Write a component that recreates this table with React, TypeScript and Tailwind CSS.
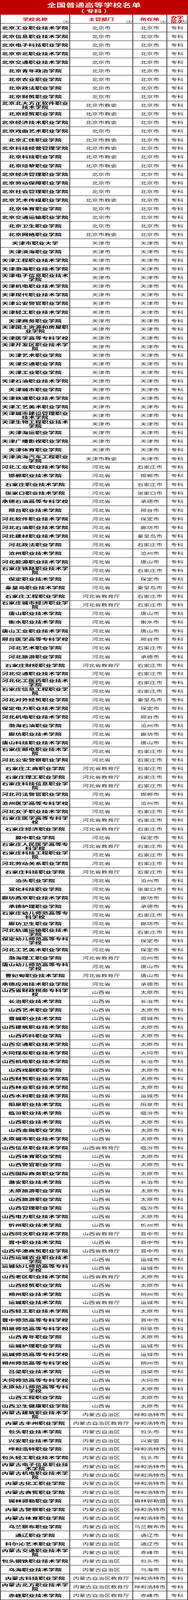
import { FC, useState } from "react";

const raw = `北京工业职业技术学院|北京市|北京市
北京信息职业技术学院|北京市|北京市
北京电子科技职业学院|北京市|北京市
北京京北职业技术学院|北京市|北京市
北京交通职业技术学院|北京市|北京市
北京青年政治学院|北京市|北京市
北京农业职业学院|北京市|北京市
北京政法职业学院|北京市|北京市
北京财贸职业学院|北京市|北京市
北京北大方正软件职业技术学院|北京市教委|北京市
北京经贸职业学院|北京市教委|北京市
北京经济技术职业学院|北京市教委|北京市
北京戏曲艺术职业学院|北京市|北京市
北京汇佳职业学院|北京市教委|北京市
北京科技经营管理学院|北京市教委|北京市
北京科技职业学院|北京市教委|北京市
北京培黎职业学院|北京市教委|北京市
北京经济管理职业学院|北京市|北京市
北京劳动保障职业学院|北京市|北京市
北京社会管理职业学院|北京市|北京市
北京艺术传媒职业学院|北京市教委|北京市
北京体育职业学院|北京市|北京市
北京交通运输职业学院|北京市|北京市
北京卫生职业学院|北京市|北京市
北京网络职业学院|北京市教委|北京市
天津市职业大学|天津市|天津市
天津滨海职业学院|天津市|天津市
天津工程职业技术学院|天津市|天津市
天津渤海职业技术学院|天津市|天津市
天津电子信息职业技术学院|天津市|天津市
天津机电职业技术学院|天津市|天津市
天津现代职业技术学院|天津市|天津市
天津公安警官职业学院|天津市|天津市
天津轻工职业技术学院|天津市|天津市
天津商务职业学院|天津市|天津市
天津国土资源和房屋职业学院|天津市|天津市
天津医学高等专科学校|天津市|天津市
天津开发区职业技术学院|天津市|天津市
天津艺术职业学院|天津市|天津市
天津交通职业学院|天津市|天津市
天津工业职业学院|天津市|天津市
天津石油职业技术学院|天津市|天津市
天津城市职业学院|天津市|天津市
天津铁道职业技术学院|天津市|天津市
天津工艺美术职业学院|天津市|天津市
天津城市建设管理职业技术学院|天津市|天津市
天津生物工程职业技术学院|天津市|天津市
天津海运职业学院|天津市|天津市
天津广播影视职业学院|天津市|天津市
天津体育职业学院|天津市|天津市
天津滨海汽车工程职业学院|天津市教委|天津市
河北工业职业技术学院|河北省|石家庄市
邯郸职业技术学院|河北省|邯郸市
石家庄职业技术学院|河北省|石家庄市
张家口职业技术学院|河北省|张家口市
承德石油高等专科学校|河北省|承德市
邢台职业技术学院|河北省|邢台市
河北软件职业技术学院|河北省|保定市
河北石油职业技术学院|河北省|廊坊市
河北建材职业技术学院|河北省|秦皇岛市
河北政法职业学院|河北省|石家庄市
沧州职业技术学院|河北省|沧州市
河北能源职业技术学院|河北省|唐山市
石家庄铁路职业技术学院|河北省|石家庄市
保定职业技术学院|河北省|保定市
秦皇岛职业技术学院|河北省|秦皇岛市
石家庄工程职业学院|河北省教育厅|石家庄市
石家庄城市经济职业学院|河北省教育厅|石家庄市
唐山职业技术学院|河北省|唐山市
衡水职业技术学院|河北省|衡水市
唐山工业职业技术学院|河北省|唐山市
邢台医学高等专科学校|河北省|邢台市
河北艺术职业学院|河北省|石家庄市
河北旅游职业学院|河北省|承德市
石家庄财经职业学院|河北省教育厅|石家庄市
河北交通职业技术学院|河北省|石家庄市
河北化工医药职业技术学院|河北省|石家庄市
石家庄信息工程职业学院|河北省|石家庄市
河北对外经贸职业学院|河北省|秦皇岛市
保定电力职业技术学院|河北省|保定市
河北机电职业技术学院|河北省|邢台市
渤海石油职业学院|河北省|沧州市
廊坊职业技术学院|河北省|廊坊市
唐山科技职业技术学院|河北省|唐山市
石家庄邮电职业技术学院|河北省|石家庄市
河北公安警察职业学院|河北省|石家庄市
石家庄工商职业学院|河北省教育厅|石家庄市
石家庄理工职业学院|河北省教育厅|石家庄市
石家庄科技信息职业学院|河北省教育厅|石家庄市
河北司法警官职业学院|河北省|邯郸市
沧州医学高等专科学校|河北省|沧州市
河北女子职业技术学院|河北省|石家庄市
石家庄医学高等专科学校|河北省教育厅|石家庄市
石家庄经济职业学院|河北省教育厅|石家庄市
冀中职业学院|河北省|保定市
石家庄人民医学高等专科学校|河北省教育厅|石家庄市
石家庄科技工程职业学院|河北省|石家庄市
河北劳动关系职业学院|河北省|石家庄市
石家庄科技职业学院|河北省教育厅|石家庄市
泊头职业学院|河北省|沧州市
宣化科技职业学院|河北省|张家口市
廊坊燕京职业技术学院|河北省|廊坊市
承德护理职业学院|河北省|承德市
石家庄幼儿师范高等专科学校|河北省|石家庄市
廊坊卫生职业学院|河北省|廊坊市
河北轨道运输职业技术学院|河北省|石家庄市
保定幼儿师范高等专科学校|河北省|保定市
河北工艺美术职业学院|河北省|保定市
渤海理工职业学院|河北省教育厅|沧州市
唐山幼儿师范高等专科学校|河北省|唐山市
曹妃甸职业技术学院|河北省教育厅|唐山市
承德应用技术职业学院|河北省|承德市
山西省财政税务专科学校|山西省|太原市
长治职业技术学院|山西省|长治市
山西艺术职业学院|山西省|太原市
晋城职业技术学院|山西省|晋城市
山西建筑职业技术学院|山西省|太原市
山西药科职业学院|山西省|太原市
山西交通职业技术学院|山西省|太原市
大同煤炭职业技术学院|山西省|大同市
山西机电职业技术学院|山西省|长治市
山西戏剧职业学院|山西省|太原市
山西财贸职业技术学院|山西省|太原市
山西林业职业技术学院|山西省|太原市
山西水利职业技术学院|山西省|运城市
阳泉职业技术学院|山西省|阳泉市
临汾职业技术学院|山西省|临汾市
山西职业技术学院|山西省|太原市
山西金融职业学院|山西省|太原市
太原城市职业技术学院|山西省|太原市
山西信息职业技术学院|山西省教育厅|临汾市
山西体育职业学院|山西省|太原市
山西警官职业学院|山西省|太原市
山西国际商务职业学院|山西省|太原市
潞安职业技术学院|山西省|长治市
太原旅游职业学院|山西省|太原市
山西旅游职业学院|山西省|太原市
山西管理职业学院|山西省|临汾市
山西电力职业技术学院|山西省|太原市
忻州职业技术学院|山西省|忻州市
山西同文职业技术学院|山西省教育厅|晋中市
晋中职业技术学院|山西省|晋中市
山西华澳商贸职业学院|山西省教育厅|晋中市
山西运城农业职业技术学院|山西省|运城市
运城幼儿师范高等专科学校|山西省|运城市
山西老区职业技术学院|山西省教育厅|太原市
山西经贸职业学院|山西省|太原市
朔州职业技术学院|山西省|朔州市
运城职业技术学院|山西省教育厅|运城市
山西轻工职业技术学院|山西省|太原市
晋中师范高等专科学校|山西省|晋中市
阳泉师范高等专科学校|山西省|阳泉市
山西青年职业学院|山西省|太原市
运城护理职业学院|山西省|运城市
运城师范高等专科学校|山西省|运城市
朔州师范高等专科学校|山西省|朔州市
吕梁职业技术学院|山西省|吕梁市
大同师范高等专科学校|山西省|大同市
太原幼儿师范高等专科学校|山西省|太原市
山西工程职业学院|山西省|太原市
山西卫生健康职业学院|山西省|太原市
内蒙古建筑职业技术学院|内蒙古自治区|呼和浩特市
内蒙古丰州职业学院|内蒙古自治区教育厅|呼和浩特市
包头职业技术学院|内蒙古自治区|包头市
兴安职业技术学院|内蒙古自治区|兴安盟
呼和浩特职业学院|内蒙古自治区|呼和浩特市
包头轻工职业技术学院|内蒙古自治区|包头市
内蒙古电子信息职业技术学院|内蒙古自治区|呼和浩特市
内蒙古机电职业技术学院|内蒙古自治区|呼和浩特市
内蒙古化工职业学院|内蒙古自治区|呼和浩特市
内蒙古商贸职业学院|内蒙古自治区|呼和浩特市
锡林郭勒职业学院|内蒙古自治区|锡林郭勒盟
内蒙古警察职业学院|内蒙古自治区|呼和浩特市
内蒙古体育职业学院|内蒙古自治区|呼和浩特市
乌兰察布职业学院|内蒙古自治区|乌兰察布市
通辽职业学院|内蒙古自治区|通辽市
科尔沁艺术职业学院|内蒙古自治区|通辽市
内蒙古交通职业技术学院|内蒙古自治区|赤峰市
包头钢铁职业技术学院|内蒙古自治区|包头市
乌海职业技术学院|内蒙古自治区|乌海市
内蒙古科技职业学院|内蒙古自治区教育厅|呼和浩特市
内蒙古北方职业技术学院|内蒙古自治区教育厅|呼和浩特市
赤峰职业技术学院|内蒙古自治区教育厅|赤峰市`;

const schools = raw
  .trim()
  .split("\n")
  .map((line) => {
    const [name, dept, city] = line.split("|");
    return { name, dept, city };
  });

const PAGE_H = 7384;

// little excel-style filter dropdown in the header cells
const FilterBtn: FC<{ active?: boolean }> = ({ active }) => (
  <div className="absolute right-[1px] bottom-[1px] w-[14px] h-[13px] border border-[#8a8a8a] bg-gradient-to-b from-[#fafafa] to-[#d6d6d6] flex items-center justify-center">
    {active ? (
      <svg width="10" height="9" viewBox="0 0 10 9">
        <path d="M0.5 1h5.5l-2.2 2.6v3.4l-1.1-0.9v-2.5z" fill="#222" />
        <path d="M6.5 5h3.2l-1.6 2.2z" fill="#222" />
      </svg>
    ) : (
      <svg width="7" height="4" viewBox="0 0 7 4">
        <path d="M0 0h7l-3.5 4z" fill="#333" />
      </svg>
    )}
  </div>
);

const cell =
  "border-r-2 border-b-2 border-[#3a3a3a] flex items-center justify-center";

const App: FC = () => {
  // the camera only sees the window; fit the full-height sheet into it
  const [fit] = useState(() =>
    typeof window === "undefined"
      ? 1
      : Math.min(1, window.innerHeight / PAGE_H)
  );

  return (
    <div
      className="w-[480px] overflow-hidden bg-white"
      style={{ height: PAGE_H * fit }}
    >
      <div
        className="w-[480px] h-[7384px] origin-top bg-white font-['Noto_Sans_CJK_SC',sans-serif]"
        style={{ transform: `scaleY(${fit})` }}
      >
        <div className="h-[68px] pt-[4px] bg-[#c00000] flex flex-col items-center justify-center text-[#fdf1f1] font-bold">
          <div className="text-[24px] leading-[29px]">全国普通高等学校名单</div>
          <div className="text-[20px] leading-[29px]">（ 专科 ）</div>
        </div>

        <div className="border-l-2 border-[#3a3a3a]">
          <div className="grid grid-cols-[177px_161px_87px_1fr] h-[41px] text-[#cc0000] font-bold text-[16px] leading-[20px]">
            <div className={`relative ${cell}`}>
              学校名称
              <FilterBtn />
            </div>
            <div className={`relative ${cell}`}>
              主管部门
              <FilterBtn />
            </div>
            <div className={`relative ${cell}`}>
              所在地
              <FilterBtn />
            </div>
            <div className="relative border-r-2 border-b-2 border-[#3a3a3a] flex items-center pl-[9px] text-[16px] leading-[18px]">
              <div className="w-[34px]">办学层次</div>
              <FilterBtn active />
            </div>
          </div>

          <div className="grid grid-cols-[177px_161px_87px_1fr] grid-rows-[repeat(183,minmax(0,1fr))] h-[7275px] text-[16px] leading-[20px] text-[#2a2a2a]">
            {schools.map((s, i) => [
              <div
                key={`n${i}`}
                className={`${cell} text-center text-[17px] leading-[18px] font-bold text-black`}
              >
                {s.name}
              </div>,
              <div key={`d${i}`} className={cell}>
                {s.dept}
              </div>,
              <div key={`c${i}`} className={`${cell} whitespace-nowrap`}>
                {s.city}
              </div>,
              <div key={`l${i}`} className={cell}>
                专科
              </div>,
            ])}
          </div>
        </div>
      </div>
    </div>
  );
};

export default App;
